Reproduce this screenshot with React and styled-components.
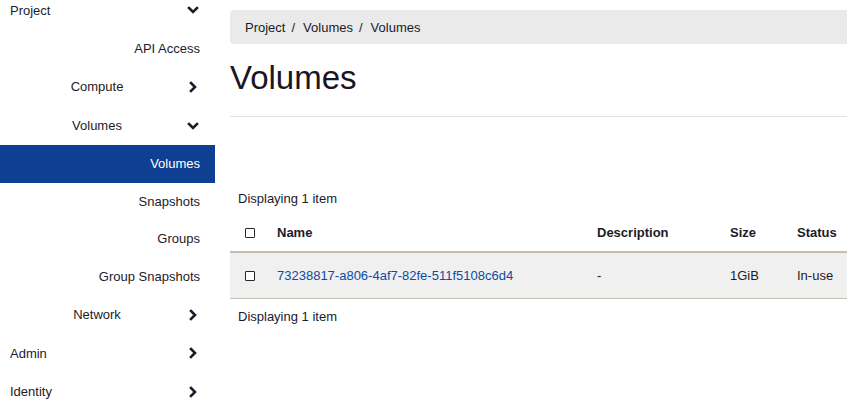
import React from 'react';
import styled, { createGlobalStyle } from 'styled-components';

const GlobalStyle = createGlobalStyle`
    html, body {
        margin: 0;
        padding: 0;
        background: #ffffff;
        overflow: hidden;
    }
    body {
        font-family: "Liberation Sans", Arial, sans-serif;
        font-size: 13px;
        color: #222222;
    }
`;

const Page = styled.div`
    display: flex;
    width: 847px;
    height: 412px;
    overflow: hidden;
`;

const Sidebar = styled.nav`
    width: 215px;
    flex-shrink: 0;
    display: flex;
    flex-direction: column;
    margin-top: -9px;
`;

const rowHeights = { top: '38.5px', mid: '39px', sub: '37.5px' };

const NavRow = styled.div`
    height: ${props => rowHeights[props.level]};
    display: flex;
    align-items: center;
    padding: 0 16px 0 10px;
    font-size: 13px;
    color: ${props => (props.active ? '#ffffff' : '#1b1b2a')};
    background-color: ${props => (props.active ? '#0f3f92' : 'transparent')};
    justify-content: ${props => (props.level === 'sub' ? 'flex-end' : 'flex-start')};
    padding-right: ${props => (props.level === 'sub' ? '15px' : '16px')};
`;

const NavLabel = styled.span`
    flex: ${props => (props.level === 'sub' ? '0 0 auto' : '1')};
    text-align: ${props => (props.level === 'mid' ? 'center' : 'left')};
    padding-right: ${props => (props.level === 'mid' ? '3px' : '0')};
`;

const Chevron = styled.svg`
    width: 12px;
    height: 12px;
    flex-shrink: 0;
`;

const Main = styled.main`
    flex: 1;
    padding: 10px 0 0 15px;
    margin-right: -30px;
    display: flex;
    flex-direction: column;
`;

const Breadcrumb = styled.div`
    height: 34px;
    display: flex;
    align-items: center;
    padding-left: 15px;
    background-color: #e9eae9;
    border-radius: 4px;
    font-size: 13px;
    color: #1b1b2a;
    gap: 6px;
`;

const Sep = styled.span`
    margin-right: 2px;
`;

const Title = styled.h1`
    margin: 14px 0 0 0;
    font-size: 33px;
    font-weight: 400;
    line-height: 40px;
    color: #1b1424;
`;

const Rule = styled.div`
    height: 1px;
    background-color: #e3e3e3;
    margin-top: 18px;
`;

const Info = styled.div`
    padding-left: 8px;
    font-size: 13px;
    line-height: 18px;
    color: #1b1b2a;
    margin-top: ${props => props.top || '0'};
`;

const Table = styled.table`
    border-collapse: collapse;
    table-layout: fixed;
    width: 640px;
    margin-top: 6px;
    margin-bottom: 9px;
`;

const HeadCell = styled.th`
    height: 37px;
    padding: 0 0 0 8px;
    text-align: left;
    font-weight: 700;
    font-size: 13px;
    color: #1b1b2a;
    border-bottom: 2px solid #c9beb3;
    vertical-align: middle;
`;

const BodyRow = styled.tr`
    background-color: #f0f0f0;
    border-bottom: 1px solid #c9beb3;
`;

const Cell = styled.td`
    height: 45px;
    padding: 0 0 0 8px;
    font-size: 13px;
    color: #1b1b2a;
    vertical-align: middle;
`;

const CheckCell = styled.td`
    padding: 0 0 0 15px;
    vertical-align: middle;
`;

const CheckHead = styled.th`
    padding: 0 0 0 15px;
    border-bottom: 2px solid #c9beb3;
    vertical-align: middle;
`;

const Box = styled.span`
    display: block;
    width: 8px;
    height: 8px;
    border: 1.5px solid #2a2230;
    border-radius: 1px;
    background: #ffffff;
`;

const Link = styled.a`
    color: #0d4ba0;
    text-decoration: none;
`;

const ChevronIcon = ({ dir }) => (
    <Chevron viewBox="0 0 12 12">
        {dir === 'down'
            ? <polyline points="2,4 6,8 10,4" fill="none" stroke="#1b1b2a" strokeWidth="2.6" strokeLinecap="square" />
            : <polyline points="4,2 8,6 4,10" fill="none" stroke="#1b1b2a" strokeWidth="2.6" strokeLinecap="square" />}
    </Chevron>
);

const nav = [
    { label: 'Project', level: 'top', chevron: 'down' },
    { label: 'API Access', level: 'sub' },
    { label: 'Compute', level: 'mid', chevron: 'right' },
    { label: 'Volumes', level: 'mid', chevron: 'down' },
    { label: 'Volumes', level: 'sub', active: true },
    { label: 'Snapshots', level: 'sub' },
    { label: 'Groups', level: 'sub' },
    { label: 'Group Snapshots', level: 'sub' },
    { label: 'Network', level: 'mid', chevron: 'right' },
    { label: 'Admin', level: 'top', chevron: 'right' },
    { label: 'Identity', level: 'top', chevron: 'right' },
];

const App = () => {
    return (
        <>
            <GlobalStyle />
            <Page>
                <Sidebar>
                    {nav.map((item, index) => (
                        <NavRow key={index} level={item.level} active={item.active}>
                            <NavLabel level={item.level}>{item.label}</NavLabel>
                            {item.chevron && <ChevronIcon dir={item.chevron} />}
                        </NavRow>
                    ))}
                </Sidebar>

                <Main>
                    <Breadcrumb>
                        <span>Project</span><Sep>/</Sep>
                        <span>Volumes</span><Sep>/</Sep>
                        <span>Volumes</span>
                    </Breadcrumb>
                    <Title>Volumes</Title>
                    <Rule />

                    <Info top="73px">Displaying 1 item</Info>
                    <Table>
                        <colgroup>
                            <col style={{ width: 39 }} />
                            <col style={{ width: 320 }} />
                            <col style={{ width: 133 }} />
                            <col style={{ width: 67 }} />
                            <col style={{ width: 81 }} />
                        </colgroup>
                        <thead>
                            <tr>
                                <CheckHead><Box /></CheckHead>
                                <HeadCell>Name</HeadCell>
                                <HeadCell>Description</HeadCell>
                                <HeadCell>Size</HeadCell>
                                <HeadCell>Status</HeadCell>
                            </tr>
                        </thead>
                        <tbody>
                            <BodyRow>
                                <CheckCell><Box /></CheckCell>
                                <Cell><Link href="#">73238817-a806-4af7-82fe-511f5108c6d4</Link></Cell>
                                <Cell>-</Cell>
                                <Cell>1GiB</Cell>
                                <Cell>In-use</Cell>
                            </BodyRow>
                        </tbody>
                    </Table>
                    <Info>Displaying 1 item</Info>
                </Main>
            </Page>
        </>
    );
};

export default App;
